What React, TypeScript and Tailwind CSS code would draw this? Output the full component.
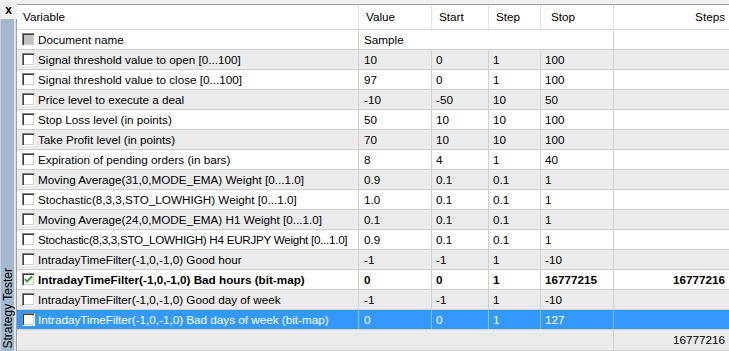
import React from 'react';

type Row = {
    name: string;
    value: string;
    start?: string;
    step?: string;
    stop?: string;
    steps?: string;
    checked?: boolean;
    bold?: boolean;
    selected?: boolean;
    doc?: boolean;
    tight?: boolean;
};

const rows: Row[] = [
    { name: 'Document name', value: 'Sample', doc: true },
    { name: 'Signal threshold value to open [0...100]', value: '10', start: '0', step: '1', stop: '100' },
    { name: 'Signal threshold value to close [0...100]', value: '97', start: '0', step: '1', stop: '100' },
    { name: 'Price level to execute a deal', value: '-10', start: '-50', step: '10', stop: '50' },
    { name: 'Stop Loss level (in points)', value: '50', start: '10', step: '10', stop: '100' },
    { name: 'Take Profit level (in points)', value: '70', start: '10', step: '10', stop: '100' },
    { name: 'Expiration of pending orders (in bars)', value: '8', start: '4', step: '1', stop: '40' },
    { name: 'Moving Average(31,0,MODE_EMA) Weight [0...1.0]', value: '0.9', start: '0.1', step: '0.1', stop: '1' },
    { name: 'Stochastic(8,3,3,STO_LOWHIGH) Weight [0...1.0]', value: '1.0', start: '0.1', step: '0.1', stop: '1' },
    { name: 'Moving Average(24,0,MODE_EMA) H1 Weight [0...1.0]', value: '0.1', start: '0.1', step: '0.1', stop: '1' },
    { name: 'Stochastic(8,3,3,STO_LOWHIGH) H4 EURJPY Weight [0...1.0]', value: '0.9', start: '0.1', step: '0.1', stop: '1', tight: true },
    { name: 'IntradayTimeFilter(-1,0,-1,0) Good hour', value: '-1', start: '-1', step: '1', stop: '-10' },
    { name: 'IntradayTimeFilter(-1,0,-1,0) Bad hours (bit-map)', value: '0', start: '0', step: '1', stop: '16777215', steps: '16777216', checked: true, bold: true },
    { name: 'IntradayTimeFilter(-1,0,-1,0) Good day of week', value: '-1', start: '-1', step: '1', stop: '-10' },
    { name: 'IntradayTimeFilter(-1,0,-1,0) Bad days of week (bit-map)', value: '0', start: '0', step: '1', stop: '127', selected: true },
];

function CheckBox({ checked, gray }: { checked?: boolean; gray?: boolean }) {
    return (
        <div
            className={`w-[13px] h-[13px] shrink-0 border-t border-l border-t-[#808080] border-l-[#808080] border-r border-b border-r-white border-b-white shadow-[inset_1px_1px_0_#404040,inset_-1px_-1px_0_#d4d0c8] flex items-center justify-center ${gray ? 'bg-[#c0c0c0]' : 'bg-white'}`}
        >
            {checked && (
                <svg width="9" height="9" viewBox="0 0 9 9">
                    <path d="M1 4 L3 6.5 L8 1.5" stroke="#21a121" strokeWidth="1.8" fill="none" />
                </svg>
            )}
        </div>
    );
}

export default function App() {
    return (
        <div className="w-[729px] h-[351px] flex bg-[#f0f0f0] overflow-hidden font-['Liberation_Sans',Arial,sans-serif] text-[11.7px] text-black leading-none">
            <div className="w-[17px] flex flex-col shrink-0">
                <div className="h-[19px] flex items-start justify-center pt-[4px] text-[12px] font-bold">x</div>
                <div className="flex-1 flex">
                    <div className="w-[14px] bg-[#a4b8d0] border-l border-l-[#c4d2e2] flex flex-col justify-end items-center pb-[3px]">
                        <span className="[writing-mode:vertical-rl] rotate-180 text-[12px] whitespace-nowrap">Strategy Tester</span>
                    </div>
                    <div className="w-[2px] bg-[#e4e4e4]" />
                    <div className="w-[1px] bg-[#a0a0a0]" />
                </div>
            </div>

            <div className="flex-1 flex flex-col pt-[4px]">
                <div className="flex-1 flex flex-col border-t border-t-[#a0a0a0] bg-white">
                    {/* header */}
                    <div className="h-[25px] flex border-b border-b-[#d6d6d6] bg-white">
                        <div className="w-[342px] border-r border-r-[#e2e2e2] flex items-center pl-[6px]">Variable</div>
                        <div className="w-[73px] border-r border-r-[#e2e2e2] flex items-center pl-[7px]">Value</div>
                        <div className="w-[57px] border-r border-r-[#e2e2e2] flex items-center pl-[7px]">Start</div>
                        <div className="w-[52px] border-r border-r-[#e2e2e2] flex items-center pl-[7px]">Step</div>
                        <div className="w-[73px] border-r border-r-[#e2e2e2] flex items-center pl-[10px]">Stop</div>
                        <div className="flex-1 flex items-center justify-end pr-[4px]">Steps</div>
                    </div>

                    {rows.map((r, i) => {
                        const bg = r.selected ? 'bg-[#3399ff] text-white' : i % 2 === 1 ? 'bg-[#ebebeb]' : 'bg-white';
                        const line = r.selected ? 'border-r-[#8fc4fa]' : 'border-r-[#d0d0d0]';
                        return (
                            <div key={i} className={`h-[20px] flex border-b border-b-[#d0d0d0] ${bg} ${r.bold ? 'font-bold' : ''}`}>
                                <div className={`w-[342px] border-r ${line} flex items-center pl-[5px] gap-[3px] whitespace-nowrap overflow-hidden`}>
                                    <CheckBox checked={r.checked} gray={r.doc} />
                                    <span className={r.tight ? 'tracking-[-0.3px]' : ''}>{r.name}</span>
                                </div>
                                {r.doc ? (
                                    <div className={`w-[255px] border-r ${line} flex items-center pl-[5px]`}>{r.value}</div>
                                ) : (
                                    <>
                                        <div className={`w-[73px] border-r ${line} flex items-center pl-[5px]`}>{r.value}</div>
                                        <div className={`w-[57px] border-r ${line} flex items-center pl-[4px]`}>{r.start}</div>
                                        <div className={`w-[52px] border-r ${line} flex items-center pl-[4px]`}>{r.step}</div>
                                        <div className={`w-[73px] border-r ${line} flex items-center pl-[4px]`}>{r.stop}</div>
                                    </>
                                )}
                                <div className="flex-1 flex items-center justify-end pr-[4px]">{r.steps}</div>
                            </div>
                        );
                    })}

                    {/* footer */}
                    <div className="h-[21px] flex bg-[#ebebeb] border-b border-b-[#d0d0d0]">
                        <div className="w-[597px] border-r border-r-[#d0d0d0]" />
                        <div className="flex-1 flex items-center justify-end pr-[4px]">16777216</div>
                    </div>
                </div>
            </div>
        </div>
    );
}
